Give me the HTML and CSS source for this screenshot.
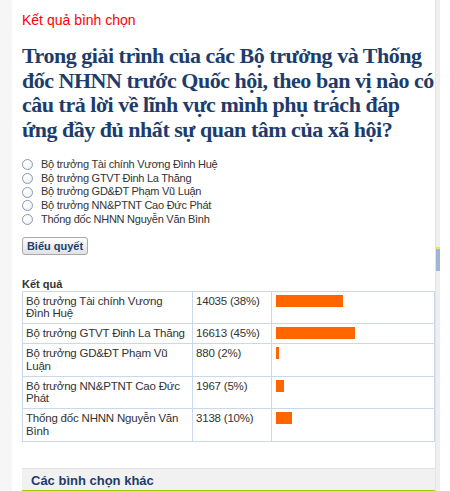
FILE: index.html
```html
<!DOCTYPE html>
<html lang="vi">
<head>
<meta charset="utf-8">
<title>Kết quả bình chọn</title>
<link rel="stylesheet" href="styles.css">
</head>
<body>
<div class="page">
  <div class="left-strip"></div>
  <div class="main">
    <div class="kicker">Kết quả bình chọn</div>
    <h1 class="question">Trong giải trình của các Bộ trưởng và Thống đốc NHNN trước Quốc hội, theo bạn vị nào có câu trả lời về lĩnh vực mình phụ trách đáp ứng đầy đủ nhất sự quan tâm của xã hội?</h1>
    <ul class="options">
      <li><span class="radio"></span>Bộ trưởng Tài chính Vương Đình Huệ</li>
      <li><span class="radio"></span>Bộ trưởng GTVT Đinh La Thăng</li>
      <li><span class="radio"></span>Bộ trưởng GD&amp;ĐT Phạm Vũ Luận</li>
      <li><span class="radio"></span>Bộ trưởng NN&amp;PTNT Cao Đức Phát</li>
      <li><span class="radio"></span>Thống đốc NHNN Nguyễn Văn Bình</li>
    </ul>
    <button class="vote">Biểu quyết</button>
    <div class="result-title">Kết quả</div>
    <table class="results">
      <tr><td class="c1">Bộ trưởng Tài chính Vương Đình Huệ</td><td class="c2">14035 (38%)</td><td class="c3"><div class="bar" style="width:67px"></div></td></tr>
      <tr><td class="c1">Bộ trưởng GTVT Đinh La Thăng</td><td class="c2">16613 (45%)</td><td class="c3"><div class="bar" style="width:79px"></div></td></tr>
      <tr><td class="c1">Bộ trưởng GD&amp;ĐT Phạm Vũ Luận</td><td class="c2">880 (2%)</td><td class="c3"><div class="bar" style="width:3px"></div></td></tr>
      <tr><td class="c1">Bộ trưởng NN&amp;PTNT Cao Đức Phát</td><td class="c2">1967 (5%)</td><td class="c3"><div class="bar" style="width:8px"></div></td></tr>
      <tr><td class="c1">Thống đốc NHNN Nguyễn Văn Bình</td><td class="c2">3138 (10%)</td><td class="c3"><div class="bar" style="width:16px"></div></td></tr>
    </table>
    <div class="other">Các bình chọn khác</div>
  </div>
  <div class="right-rail"><div class="thumb"></div></div>
</div>
</body>
</html>
```
FILE: styles.css
```css
html, body {
  margin: 0;
  padding: 0;
  background: #fff;
}
body {
  font-family: "Liberation Sans", Arial, sans-serif;
  color: #333;
}
.page {
  display: flex;
  height: 491px;
  overflow: hidden;
}
.left-strip {
  width: 12px;
  flex: none;
  background: #f6f6f6;
}
.main {
  width: 413px;
  flex: none;
  padding-left: 10px;
}
.right-rail {
  width: 4px;
  flex: none;
  background: #efefef;
  border-left: 1px solid #e4e4e4;
  padding-top: 247px;
}
.thumb {
  height: 22px;
  background: #9fb4d6;
  border-top: 2px solid #f3dc6a;
}
.kicker {
  color: #f00;
  font-size: 14px;
  line-height: 16px;
  padding-top: 12px;
}
.question {
  margin: 16px -2px 0 0;
  font-family: "Liberation Serif", "Times New Roman", serif;
  font-weight: bold;
  font-size: 22px;
  letter-spacing: -0.48px;
  line-height: 24.5px;
  color: #1c3d6c;
}
.options {
  list-style: none;
  margin: 16px 0 0;
  padding: 0;
  font-size: 11px;
  letter-spacing: -0.25px;
  line-height: 13.7px;
  color: #333;
}
.options li {
  display: flex;
  align-items: center;
}
.radio {
  width: 9px;
  height: 9px;
  border-radius: 50%;
  border: 1px solid #8a9ab0;
  background: radial-gradient(circle at 40% 35%, #fff 30%, #dfe5ec 100%);
  margin-right: 8px;
  flex: none;
}
.vote {
  display: block;
  margin-top: 10px;
  width: 66px;
  height: 18px;
  padding: 0;
  font-family: "Liberation Sans", Arial, sans-serif;
  font-size: 11px;
  font-weight: bold;
  color: #1c3d6c;
  border: 1px solid #a9a9a9;
  border-radius: 3px;
  background: linear-gradient(#fdfdfd, #e2e2e2);
}
.result-title {
  margin-top: 23px;
  font-size: 11px;
  font-weight: bold;
  line-height: 13px;
  color: #333;
}
.results {
  border-collapse: collapse;
  width: 413px;
  margin-top: 0;
  font-size: 11.5px;
  letter-spacing: -0.2px;
  line-height: 12.5px;
  color: #333;
}
.results td {
  border: 1px solid #c9d8eb;
  vertical-align: top;
  padding: 3px 4px 3.5px 3px;
}
.results .c1 { width: 162px; }
.results .c2 { width: 71px; }
.bar {
  height: 12px;
  background: #ff6600;
  margin-left: 1px;
}
.other {
  margin-top: 26px;
  background: #f1f1f1;
  border-top: 1px solid #e2e2e2;
  border-bottom: 2px solid #99cc00;
  font-size: 13px;
  font-weight: bold;
  color: #1c3d6c;
  padding: 4px 9px 1px;
  line-height: 16px;
}
```
